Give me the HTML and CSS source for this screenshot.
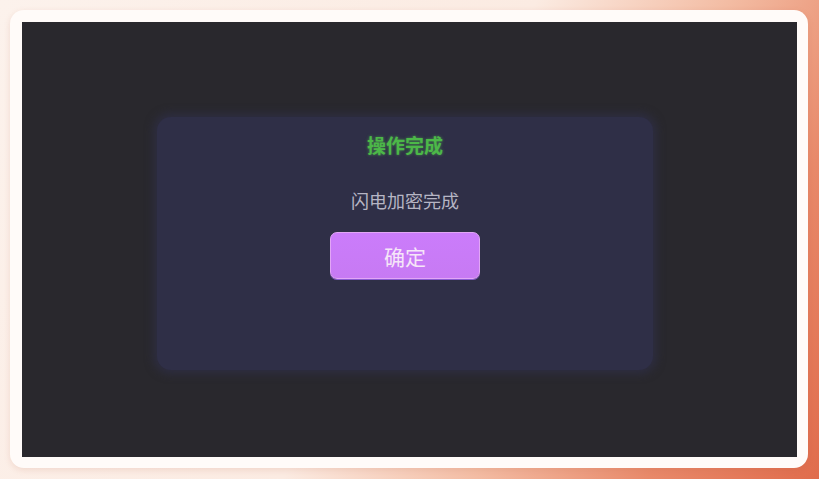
FILE: index.html
```html
<!DOCTYPE html>
<html lang="zh">
<head>
<meta charset="utf-8">
<title>操作完成</title>
<link rel="stylesheet" href="styles.css">
</head>
<body>
<div class="frame">
  <div class="screen">
    <div class="dialog">
      <div class="dialog-title">操作完成</div>
      <div class="dialog-msg">闪电加密完成</div>
      <button class="dialog-btn">确定</button>
    </div>
  </div>
</div>
</body>
</html>
```
FILE: styles.css
```css
html, body {
  margin: 0;
  padding: 0;
  width: 819px;
  height: 479px;
  overflow: hidden;
}
body {
  background: linear-gradient(118deg, #fcf2ec 0%, #fbebe2 50%, #f3bca3 68%, #e8896a 84%, #e06c4c 100%);
  font-family: "Noto Sans CJK SC", "Noto Sans", sans-serif;
  padding: 10px 11px 11px 10px;
  box-sizing: border-box;
}
.frame {
  width: 798px;
  height: 458px;
  background: #fffbf9;
  border-radius: 14px;
  padding: 12px 11px 11px 12px;
  box-sizing: border-box;
  box-shadow: 0 2px 6px rgba(180, 90, 60, 0.15);
}
.screen {
  width: 100%;
  height: 100%;
  background: #29282d;
  display: flex;
  justify-content: center;
  align-items: center;
}
.dialog {
  width: 496px;
  height: 253px;
  margin: 8px 9px 0 0;
  background: #2f2f47;
  border-radius: 14px;
  box-shadow: 0 0 8px 4px rgba(47, 47, 71, 0.75);
  display: flex;
  flex-direction: column;
  align-items: center;
  box-sizing: border-box;
  padding-top: 14px;
}
.dialog-title {
  color: #4cb848;
  font-weight: 700;
  font-size: 19px;
  line-height: 28px;
  text-shadow: 0 0 3px rgba(90, 210, 80, 0.55);
}
.dialog-msg {
  margin-top: 27px;
  color: #b6b5c4;
  font-size: 18px;
  line-height: 28px;
}
.dialog-btn {
  margin-top: 18px;
  width: 150px;
  height: 47px;
  border: 1px solid #e2a6f6;
  border-radius: 7px;
  background: linear-gradient(180deg, #cb7cfb 0%, #c77af3 100%);
  color: #f6e6f8;
  font-family: "Noto Sans CJK SC", "Noto Sans", sans-serif;
  font-size: 21px;
  padding: 0;
  box-shadow: 0 1px 0 #8a5ad0;
}
```
